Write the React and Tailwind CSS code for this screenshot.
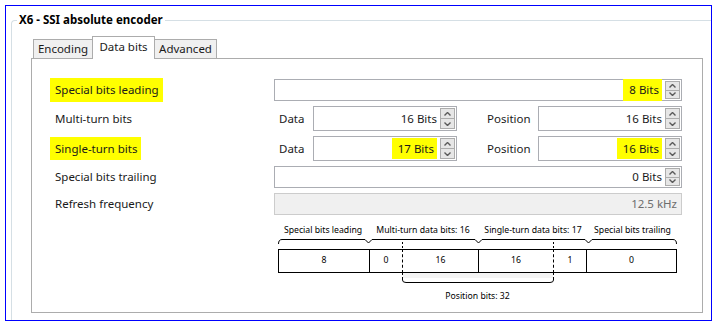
import React from "react";

const Arrow = ({ up }) => (
  <svg width="7" height="4" viewBox="0 0 7 4" className="block">
    <path
      d={up ? "M0.5 3.5 L3.5 0.5 L6.5 3.5" : "M0.5 0.5 L3.5 3.5 L6.5 0.5"}
      fill="none"
      stroke="#5a5a5a"
      strokeWidth="1.4"
    />
  </svg>
);

const Spinner = () => (
  <div className="flex flex-col w-[16px] py-[1px] pr-[1px]">
    <div className="flex-1 flex items-center justify-center border border-[#acacac] bg-[#e6e6e6]">
      <Arrow up />
    </div>
    <div className="flex-1 flex items-center justify-center border border-t-0 border-[#acacac] bg-[#e6e6e6]">
      <Arrow />
    </div>
  </div>
);

const NumBox = ({ value, hl, className = "" }) => (
  <div className={`flex items-stretch border border-[#abadb3] bg-white h-full ${className}`}>
    <div className="flex-1 flex items-center justify-end pr-[3px]">
      <span className={hl ? "bg-[#ffff00] pl-[6px] pr-[3px] py-[2px]" : ""}>{value}</span>
    </div>
    <Spinner />
  </div>
);

const Label = ({ children, hl }) => (
  <div className="w-[219px] flex items-center">
    <span className={hl ? "bg-[#ffff00] -ml-[5px] pl-[5px] pr-[4px] py-[3px]" : ""}>
      {children}
    </span>
  </div>
);

const TopBrace = () => (
  <svg width="399" height="12" viewBox="0 0 399 12" className="block">
    <path
      d="M0.5 7 Q0.5 2.5 4 2.5 L87 2.5 L90.5 6 L94 2.5 L197 2.5 L200.5 6 L204 2.5 L307 2.5 L310.5 6 L314 2.5 L395 2.5 Q398.5 2.5 398.5 7"
      fill="none"
      stroke="#000"
      strokeWidth="1"
    />
    <path d="M124.5 5 L124.5 12 M275.5 5 L275.5 12" stroke="#000" strokeDasharray="2 2" />
  </svg>
);

const BottomBrace = () => (
  <svg width="399" height="12" viewBox="0 0 399 12" className="block">
    <rect x="125" y="0" width="150" height="5" fill="#f4f4f4" />
    <path d="M124.5 0 L124.5 5 M275.5 0 L275.5 5" stroke="#000" strokeDasharray="2 2" />
    <path
      d="M124.5 5 L124.5 7 Q124.5 9.5 128 9.5 L272 9.5 Q275.5 9.5 275.5 7 L275.5 5"
      fill="none"
      stroke="#000"
    />
  </svg>
);

const cells = [
  { w: "w-[91px]", v: "8", cls: "border-l" },
  { w: "w-[33px]", v: "0", cls: "border-l" },
  { w: "w-[76px]", v: "16", cls: "border-l [border-left-style:dashed]" },
  { w: "w-[75px]", v: "16", cls: "border-l" },
  { w: "w-[33px]", v: "1", cls: "border-l [border-left-style:dashed]" },
  { w: "w-[91px]", v: "0", cls: "border-l border-r" },
];

export default function App() {
  return (
    <div className="w-[717px] h-[326px] bg-white pl-[5px] pt-[5px] overflow-hidden font-['Noto_Sans','Open_Sans',sans-serif] text-[11.5px] text-[#1a1a1a]">
      <div className="w-[707px] h-[316px] border border-[#0000ff] pl-[5px] pt-[14px] overflow-hidden">
        <div className="relative h-[320px] border-l border-t border-[#d5dfe5] rounded-tl-[4px] pl-[19px] pt-[15px]">
          <div className="absolute left-[5px] top-[-10px] bg-white px-[2px] font-bold text-[11.5px] leading-[18px] text-black">
            X6 - SSI absolute encoder
          </div>

          {/* Tabs */}
          <div className="flex items-end h-[22px] pl-[2px]">
            <div className="w-[60px] h-[19px] border border-b-0 border-[#acacac] bg-[#f0f0f0] flex items-center justify-center leading-none pb-[1px]">
              Encoding
            </div>
            <div className="relative z-10 w-[63px] h-[23px] -ml-[1px] -mb-[1px] border border-b-0 border-[#acacac] bg-white flex items-start justify-center pt-[4px] leading-none">
              Data bits
            </div>
            <div className="w-[63px] h-[19px] -ml-[1px] border border-b-0 border-[#acacac] bg-[#f0f0f0] flex items-center justify-center leading-none pb-[1px]">
              Advanced
            </div>
          </div>

          {/* Panel */}
          <div className="w-[672px] h-[255px] border border-[#acacac] bg-white pl-[23px] pt-[20px]">
            <div className="flex h-[22px]">
              <Label hl>Special bits leading</Label>
              <NumBox value="8 Bits" hl className="w-[408px]" />
            </div>

            <div className="flex h-[25px] mt-[5px]">
              <Label>Multi-turn bits</Label>
              <div className="w-[39px] pl-[5px] flex items-center">Data</div>
              <NumBox value="16 Bits" className="w-[144px]" />
              <div className="w-[81px] pl-[30px] flex items-center">Position</div>
              <NumBox value="16 Bits" className="w-[144px]" />
            </div>

            <div className="flex h-[25px] mt-[5px]">
              <Label hl>Single-turn bits</Label>
              <div className="w-[39px] pl-[5px] flex items-center">Data</div>
              <NumBox value="17 Bits" hl className="w-[144px]" />
              <div className="w-[81px] pl-[30px] flex items-center">Position</div>
              <NumBox value="16 Bits" hl className="w-[144px]" />
            </div>

            <div className="flex h-[22px] mt-[5px]">
              <Label>Special bits trailing</Label>
              <NumBox value="0 Bits" className="w-[408px]" />
            </div>

            <div className="flex h-[22px] mt-[5px]">
              <Label>Refresh frequency</Label>
              <div className="w-[408px] h-full border border-[#cccccc] bg-[#f0f0f0] flex items-center justify-end pr-[4px] text-[#6d6d6d]">
                12.5 kHz
              </div>
            </div>

            {/* Bit layout diagram */}
            <div className="ml-[223px] mt-[8px] w-[399px] text-[8.7px] text-black">
              <div className="flex h-[14px] leading-[14px] text-center">
                <div className="w-[90px]">Special bits leading</div>
                <div className="w-[110px]">Multi-turn data bits: 16</div>
                <div className="w-[110px]">Single-turn data bits: 17</div>
                <div className="w-[89px]">Special bits trailing</div>
              </div>
              <TopBrace />
              <div className="flex h-[24px]">
                {cells.map((c, i) => (
                  <div
                    key={i}
                    className={`${c.w} ${c.cls} border-t border-b border-black flex items-center justify-center`}
                  >
                    {c.v}
                  </div>
                ))}
              </div>
              <BottomBrace />
              <div className="mt-[4px] h-[14px] leading-[14px] text-center">Position bits: 32</div>
            </div>
          </div>
        </div>
      </div>
    </div>
  );
}
